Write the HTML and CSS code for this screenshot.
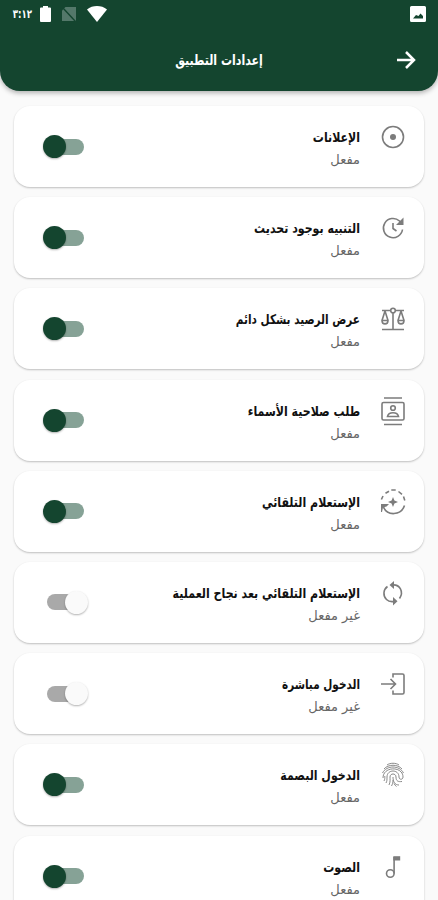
FILE: index.html
```html
<!DOCTYPE html>
<html lang="ar" dir="rtl">

<head>
  <meta charset="UTF-8">
  <meta name="viewport" content="width=device-width, initial-scale=1.0">
  <title>إعدادات التطبيق</title>
  <link rel="stylesheet" href="styles.css">
</head>

<body>
  <header class="header">
    <div class="status-bar">
      <svg class="status-picture" viewBox="0 0 16 16">
        <path fill="#fff" fill-rule="evenodd" d="M1.500 0h13A1.500 1.500 0 0 1 16 1.500v13a1.500 1.500 0 0 1-1.500 1.500h-13A1.500 1.500 0 0 1 0 14.500v-13A1.500 1.500 0 0 1 1.500 0zM3 12.500h10V10l-2.500-2.500-2 2.500-2.500-1z" />
      </svg>
      <div class="status-icons">
        <svg width="20" height="16" viewBox="0 0 20 16">
          <path fill="#fff" d="M0 3.500C5.500-1.100 14.500-1.100 20 3.500L10 16z" />
        </svg>
        <svg width="14" height="16" viewBox="0 0 14 16">
          <path fill="#54786a" d="M3.500 1H14v14H0V4.500z" />
          <path stroke="#14452f" stroke-width="1.500" d="M0 1l14 15" />
        </svg>
        <svg width="11" height="16" viewBox="0 0 11 16">
          <path fill="#fff" d="M3 0h5v1.500h2q1 0 1 1V15q0 1-1 1H1q-1 0-1-1V2.500q0-1 1-1h2z" />
        </svg>
        <span class="clock">٣:١٢</span>
      </div>
    </div>
    <div class="toolbar">
      <svg class="back" viewBox="0 0 20 20">
        <path d="M1 10h17M10 2l8 8-8 8" />
      </svg>
      <h1>إعدادات التطبيق</h1>
    </div>
  </header>

  <main class="settings">
    <section class="card">
      <svg class="icon" viewBox="0 0 24 24">
        <circle cx="12" cy="12" r="10.500" />
        <circle class="solid" cx="12" cy="12" r="3" />
      </svg>
      <div class="text">
        <h2>الإعلانات</h2>
        <p>مفعل</p>
      </div>
      <span class="switch on"></span>
    </section>

    <section class="card">
      <svg class="icon" viewBox="0 0 24 24">
        <path d="M21.500 13.500A9.600 9.600 0 1 1 18.500 5l2 2M12 7v5.500l3.500 2.500" />
        <path class="solid" d="M22.500 1.500v7.500H15z" />
      </svg>
      <div class="text">
        <h2>التنبيه بوجود تحديث</h2>
        <p>مفعل</p>
      </div>
      <span class="switch on"></span>
    </section>

    <section class="card">
      <svg class="icon" viewBox="0 0 24 24">
        <circle cx="12" cy="3.500" r="2.300" />
        <path d="M1 3.500h8.700M14.300 3.500H23M12 6v16.500M1 22.500h22M4 4L1 13.500M4 4l3 9.500M20 4l-3 9.500M20 4l3 9.500M1 13.500h6c0 4.500-6 4.500-6 0zM17 13.500h6c0 4.500-6 4.500-6 0z" />
      </svg>
      <div class="text">
        <h2 class="narrow">عرض الرصيد بشكل دائم</h2>
        <p>مفعل</p>
      </div>
      <span class="switch on"></span>
    </section>

    <section class="card">
      <svg class="icon" viewBox="0 0 24 24">
        <path d="M3-1h18M3 25.500h18" />
        <rect x="1" y="3.500" width="22" height="17.500" rx="1.500" />
        <circle cx="12" cy="9" r="2.300" />
        <path d="M6.500 17.500c1-5 10-5 11 0z" />
      </svg>
      <div class="text">
        <h2>طلب صلاحية الأسماء</h2>
        <p>مفعل</p>
      </div>
      <span class="switch on"></span>
    </section>

    <section class="card">
      <svg class="icon" viewBox="0 0 24 24">
        <path d="M2.500 17C6 26 20 26 23.500 15.500" />
        <path d="M.4 9.500l1.600-3.500M4.500 3.300l3.500-2M10.300 0h4.400M17.500 1.500l3.500 2.800M22.500 6.500l1.300 4" />
        <path class="solid" d="M0 14h8l-2.500 2.500L2 17.500 1 22H0z" />
        <path class="solid" d="M12 7l1.400 3.600L17 12l-3.600 1.400L12 17l-1.400-3.600L7 12l3.600-1.400z" />
      </svg>
      <div class="text">
        <h2>الإستعلام التلقائي</h2>
        <p>مفعل</p>
      </div>
      <span class="switch on"></span>
    </section>

    <section class="card">
      <svg class="icon" viewBox="0 0 24 24">
        <path d="M5.500 18.500A8.500 8.500 0 0 1 6.500 5.500M11 4c8-1 12 7 7.500 13.500M13 20.500c-3 .5-5.500 0-7.500-2" />
        <path class="solid" d="M13 0v8L8.500 4zM12 16v8.500l4.500-4.300z" />
      </svg>
      <div class="text">
        <h2>الإستعلام التلقائي بعد نجاح العملية</h2>
        <p>غير مفعل</p>
      </div>
      <span class="switch"></span>
    </section>

    <section class="card">
      <svg class="icon" viewBox="0 0 24 24">
        <path d="M12 5.500V2h9.500q1.500 0 1.500 1.500v17q0 1.500-1.500 1.500H12v-3.500M0 12h14.500M9.500 7l5 5-5 5" />
      </svg>
      <div class="text">
        <h2 class="narrow">الدخول مباشرة</h2>
        <p>غير مفعل</p>
      </div>
      <span class="switch"></span>
    </section>

    <section class="card">
      <svg class="icon thin" viewBox="0 0 24 24">
        <path d="M6 2c3-2.300 9-2.300 12 0M3 6c4-5 14-5 18 0M1.500 10c4-8 17-8 21 0M2 15c0-12 20-12 20-1 0 3-4 3-4 0 0-8-12-8-12 0 0 3 0 4-1 6M3 18c1-2 .8-3 .8-5M8 22c1.500-3 1-6 1-8 0-4 6-4 6 0s2 5 6 4.500M12 14c0 5 2 8 6 8M12 17c0 3-.5 4-1.500 6M13 20.500q1 2 2.500 3" />
      </svg>
      <div class="text">
        <h2>الدخول البصمة</h2>
        <p>مفعل</p>
      </div>
      <span class="switch on"></span>
    </section>

    <section class="card">
      <svg class="icon" viewBox="0 0 24 24">
        <circle cx="9.300" cy="18.500" r="3.800" />
        <path d="M13.100 18.500V2" />
        <path class="solid" d="M12.300 1.200h6.900v4.300h-6.900z" />
      </svg>
      <div class="text">
        <h2>الصوت</h2>
        <p>مفعل</p>
      </div>
      <span class="switch on"></span>
    </section>
  </main>
</body>

</html>
```
FILE: styles.css
```css
* {
  box-sizing: border-box;
}

body {
  margin: 0;
  height: 900px;
  overflow: hidden;
  background-color: #fafafa;
  font-family: 'DejaVu Sans', sans-serif;
}

.header {
  height: 91px;
  background-color: #14452f;
  border-radius: 0 0 20px 20px;
  box-shadow: 0 2px 5px rgba(0, 0, 0, 0.3);
  color: #fff;
}

.status-bar {
  display: flex;
  justify-content: space-between;
  align-items: center;
  height: 28px;
  padding: 0 12px 0 10px;
}

.status-picture {
  width: 16px;
  height: 16px;
}

.status-icons {
  display: flex;
  align-items: center;
  gap: 11px;
}

.clock {
  width: 22px;
  margin-right: -3px;
  font-size: 12px;
  font-weight: bold;
  white-space: nowrap;
  transform: scaleX(0.72);
  transform-origin: right;
}

.toolbar {
  display: grid;
  grid-template-columns: 20px 1fr 20px;
  align-items: center;
  height: 63px;
  padding: 0 22px;
}

.back {
  width: 20px;
  height: 20px;
  fill: none;
  stroke: #fff;
  stroke-width: 2.5;
}

.toolbar h1 {
  margin: 0;
  font-size: 14px;
  line-height: 20px;
  text-align: center;
  white-space: nowrap;
  transform: scaleX(0.785);
}

.settings {
  display: flex;
  flex-direction: column;
  gap: 10.2px;
  padding: 15px 14px 0;
}

.card {
  display: flex;
  flex-shrink: 0;
  height: 81px;
  padding: 0 19px 0 29px;
  background-color: #fff;
  border-radius: 16px;
  box-shadow: 0 1px 2px rgba(0, 0, 0, 0.24);
}

.icon {
  width: 24px;
  height: 24px;
  margin-top: 19px;
  overflow: visible;
  fill: none;
  stroke: #7c7c7c;
  stroke-width: 1.6;
}

.icon .solid {
  fill: #7c7c7c;
  stroke: none;
}

.icon.thin {
  stroke-width: 0.9;
}

.text {
  flex: 1;
  margin-right: 21px;
  padding-top: 20px;
}

.text h2 {
  margin: 0;
  color: #111;
  font-size: 13.5px;
  line-height: 22px;
  white-space: nowrap;
  transform: scaleX(0.815);
  transform-origin: right;
}

.text h2.narrow {
  transform: scaleX(0.775);
}

.text p {
  margin: 0;
  color: #666;
  font-size: 13px;
  line-height: 23px;
}

.switch {
  position: relative;
  align-self: center;
  width: 45px;
  height: 24px;
}

.switch::before {
  content: '';
  position: absolute;
  top: 4px;
  left: 4px;
  width: 37px;
  height: 16px;
  border-radius: 8px;
  background-color: #a9a9a9;
}

.switch::after {
  content: '';
  position: absolute;
  top: 0.5px;
  right: 0;
  width: 23px;
  height: 23px;
  border-radius: 50%;
  background-color: #fafafa;
  box-shadow: 0 1px 2px rgba(0, 0, 0, 0.3);
}

.switch.on::before {
  background-color: #86a296;
}

.switch.on::after {
  right: auto;
  left: 0;
  background-color: #14452f;
}
```
